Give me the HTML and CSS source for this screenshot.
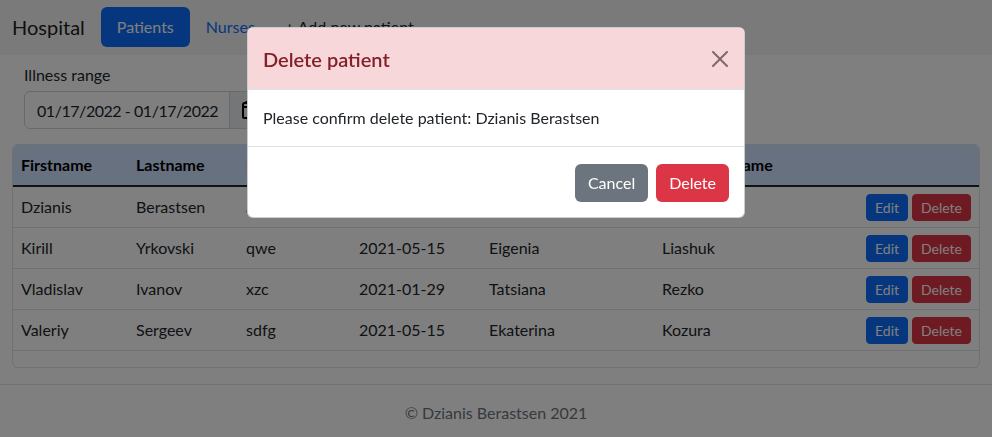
FILE: index.html
```html
<!DOCTYPE html>
<html lang="en">
<head>
<meta charset="utf-8">
<title>Hospital</title>
<link rel="stylesheet" href="styles.css">
</head>
<body>
<nav class="navbar">
  <span class="brand">Hospital</span>
  <ul class="nav">
    <li><a class="nav-link active">Patients</a></li>
    <li><a class="nav-link">Nurses</a></li>
    <li><a class="nav-link add">+ Add new patient</a></li>
  </ul>
</nav>

<main class="main">
  <div class="filter">
    <label class="label">Illness range</label>
    <div class="input-group">
      <input class="date-input" type="text" value="01/17/2022 - 01/17/2022">
      <span class="input-addon">
        <svg width="16" height="18" viewBox="0 0 16 18"><rect x="1" y="2" width="14" height="15" rx="1.5" fill="none" stroke="#000" stroke-width="2"/><path d="M1 6h14" stroke="#000" stroke-width="2"/><path d="M4.5 0v3M11.5 0v3" stroke="#000" stroke-width="2"/></svg>
      </span>
    </div>
  </div>

  <div class="table-card">
    <table class="table">
      <colgroup>
        <col class="c1"><col class="c2"><col class="c3"><col class="c4"><col class="c5"><col class="c6"><col>
      </colgroup>
      <thead>
        <tr>
          <th>Firstname</th><th>Lastname</th><th>Diagnosis</th><th>Date</th><th>Nurse firstname</th><th>Nurse lastname</th><th></th>
        </tr>
      </thead>
      <tbody>
        <tr><td>Dzianis</td><td>Berastsen</td><td>asd</td><td>2021-05-15</td><td>Ekaterina</td><td>Kozura</td><td class="actions"><button class="btn-sm edit">Edit</button><button class="btn-sm del">Delete</button></td></tr>
        <tr><td>Kirill</td><td>Yrkovski</td><td>qwe</td><td>2021-05-15</td><td>Eigenia</td><td>Liashuk</td><td class="actions"><button class="btn-sm edit">Edit</button><button class="btn-sm del">Delete</button></td></tr>
        <tr><td>Vladislav</td><td>Ivanov</td><td>xzc</td><td>2021-01-29</td><td>Tatsiana</td><td>Rezko</td><td class="actions"><button class="btn-sm edit">Edit</button><button class="btn-sm del">Delete</button></td></tr>
        <tr><td>Valeriy</td><td>Sergeev</td><td>sdfg</td><td>2021-05-15</td><td>Ekaterina</td><td>Kozura</td><td class="actions"><button class="btn-sm edit">Edit</button><button class="btn-sm del">Delete</button></td></tr>
      </tbody>
    </table>
  </div>
</main>

<footer class="footer">© Dzianis Berastsen 2021</footer>

<div class="backdrop"></div>
<div class="modal">
  <div class="modal-header">
    <h5 class="modal-title">Delete patient</h5>
    <button class="btn-close" aria-label="Close">
      <svg width="16" height="16" viewBox="0 0 16 16"><path d="M.293.293a1 1 0 011.414 0L8 6.586 14.293.293a1 1 0 111.414 1.414L9.414 8l6.293 6.293a1 1 0 01-1.414 1.414L8 9.414l-6.293 6.293a1 1 0 01-1.414-1.414L6.586 8 .293 1.707a1 1 0 010-1.414z" fill="#000"/></svg>
    </button>
  </div>
  <div class="modal-body">Please confirm delete patient: Dzianis Berastsen</div>
  <div class="modal-footer">
    <button class="btn secondary">Cancel</button>
    <button class="btn danger">Delete</button>
  </div>
</div>
</body>
</html>
```

FILE: styles.css
```css
* { box-sizing: border-box; }
html, body { margin: 0; padding: 0; }
body {
  font-family: Lato, "Noto Sans", sans-serif;
  font-size: 16px;
  line-height: 24px;
  color: #212529;
  background: #fff;
  width: 992px;
  height: 437px;
  overflow: hidden;
}

.navbar {
  display: flex;
  align-items: center;
  padding: 7px 12px 8px;
  background: #f4f4f5;
  height: 55px;
}
.brand {
  font-size: 20px;
  line-height: 30px;
  margin-right: 16px;
  color: rgba(0,0,0,.9);
}
.nav {
  display: flex;
  list-style: none;
  margin: 0;
  padding: 0;
}
.nav-link {
  display: block;
  padding: 8px 16px;
  color: #0d6efd;
  border-radius: 6px;
  cursor: pointer;
}
.nav-link.active { background: #0d6efd; color: #fff; }
.nav-link.add { color: #212529; padding-left: 14px; }

.main { padding: 8px 12px 0; }
.filter { padding: 0 12px; }
.label { display: block; margin-bottom: 4px; }
.input-group { display: flex; }
.date-input {
  width: 206px;
  height: 38px;
  padding: 6px 4px 6px 12px;
  font: inherit;
  letter-spacing: -0.45px;
  color: #212529;
  border: 1px solid #ced4da;
  border-radius: 6px 0 0 6px;
  background: #fff;
}
.input-addon {
  display: flex;
  align-items: center;
  padding: 0 12px;
  height: 38px;
  margin-left: -1px;
  background: #e9ecef;
  border: 1px solid #ced4da;
  border-radius: 0 6px 6px 0;
}

.table-card {
  margin-top: 15px;
  border: 1px solid #dee2e6;
  border-radius: 6px;
  overflow: hidden;
  padding-bottom: 16px;
}
.table {
  width: 100%;
  border-collapse: collapse;
  table-layout: fixed;
}
.c1 { width: 115px; }
.c2 { width: 110px; }
.c3 { width: 113px; }
.c4 { width: 130px; }
.c5 { width: 173px; }
.c6 { width: 200px; }
.table th, .table td {
  padding: 8px;
  text-align: left;
  vertical-align: middle;
  white-space: nowrap;
}
.table thead th {
  background: #cfe2ff;
  color: #000;
  font-weight: 700;
  border-bottom: 2px solid #212529;
}
.table tbody td { border-bottom: 1px solid #dee2e6; }
.actions { text-align: right !important; padding-top: 0 !important; padding-bottom: 0 !important; }

.btn-sm {
  font: inherit;
  font-size: 14px;
  line-height: 21px;
  padding: 2px 8px;
  border-radius: 4px;
  border: 1px solid transparent;
  color: #fff;
  margin-left: 4px;
  vertical-align: middle;
}
.btn-sm.edit { background: #0d6efd; border-color: #0d6efd; }
.btn-sm.del { background: #dc3545; border-color: #dc3545; }

.footer {
  margin-top: 16px;
  border-top: 1px solid #dee2e6;
  padding-top: 16px;
  text-align: center;
  color: #6c757d;
}

.backdrop {
  position: fixed;
  inset: 0;
  background: rgba(0,0,0,.5);
}
.modal {
  position: fixed;
  top: 27px;
  left: 247px;
  width: 498px;
  background: #fff;
  border-radius: 6px;
  overflow: hidden;
  border: 1px solid rgba(0,0,0,.2);
}
.modal-header {
  display: flex;
  align-items: center;
  justify-content: space-between;
  height: 62px;
  padding: 0 16px 0 15px;
  background: #f8d7da;
  border-bottom: 1px solid #dee2e6;
}
.modal-title {
  margin: 0;
  font-size: 20px;
  line-height: 30px;
  font-weight: 600;
  color: #842029;
}
.btn-close {
  background: none;
  border: 0;
  padding: 8px;
  margin: -8px -8px -8px auto;
  opacity: .5;
  display: flex;
  cursor: pointer;
}
.modal-body { padding: 16px 16px 16px 15px; }
.modal-footer {
  display: flex;
  justify-content: flex-end;
  align-items: center;
  gap: 8px;
  height: 71px;
  padding: 2px 15px 0;
  border-top: 1px solid #dee2e6;
}
.btn {
  font: inherit;
  padding: 6px 12px;
  height: 38px;
  min-width: 72px;
  border-radius: 6px;
  border: 1px solid transparent;
  color: #fff;
}
.btn.secondary { background: #6c757d; }
.btn.danger { background: #dc3545; }
```
